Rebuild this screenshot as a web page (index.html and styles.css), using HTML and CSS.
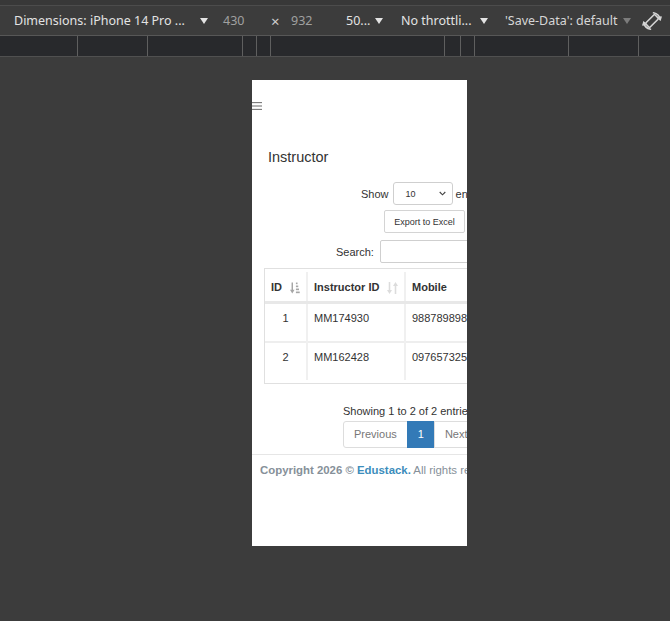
FILE: index.html
```html
<!DOCTYPE html>
<html lang="en">
<head>
    <meta charset="UTF-8" />
    <title>Instructor - Device preview</title>
    <link rel="stylesheet" href="styles.css">
</head>
<body>

<div class="tab-strip"></div>

<div class="toolbar">
    <span class="tb-select tb-dims">Dimensions: iPhone 14 Pro ...<i class="caret"></i></span>
    <span class="tb-num tb-width">430</span>
    <span class="tb-x">&times;</span>
    <span class="tb-num tb-height">932</span>
    <span class="tb-select tb-zoom">50...<i class="caret"></i></span>
    <span class="tb-select tb-throttle">No throttli...<i class="caret"></i></span>
    <span class="tb-select tb-save">'Save-Data': default<i class="caret dim"></i></span>
    <svg class="tb-rotate" viewBox="0 0 20 20" width="20" height="20">
        <g fill="none" stroke="#d4d4d4" stroke-width="1.6" stroke-linecap="round">
            <rect x="7" y="3.5" width="6" height="13" rx="1" transform="rotate(45 10 10)"/>
            <path d="M11.5 1.8 A8.3 8.3 0 0 1 18.2 8.5"/>
            <path d="M16.2 6.8 L18.2 8.5 L19 5.9"/>
            <path d="M8.5 18.2 A8.3 8.3 0 0 1 1.8 11.5"/>
            <path d="M3.8 13.2 L1.8 11.5 L1 14.1"/>
        </g>
    </svg>
</div>

<div class="ruler">
    <span></span><span></span><span></span><span></span><span></span>
    <span></span><span></span><span></span><span></span><span></span>
    <span></span>
</div>

<main class="stage">
    <div class="device">
        <div class="page">
            <svg class="menu-btn" viewBox="0 0 10 8" width="10" height="8">
                <g stroke="#777" stroke-width="1.1">
                    <line x1="0" y1="0.6" x2="10" y2="0.6"/>
                    <line x1="0" y1="4" x2="10" y2="4"/>
                    <line x1="0" y1="7.4" x2="10" y2="7.4"/>
                </g>
            </svg>

            <h1 class="page-title">Instructor</h1>

            <div class="dt-length">
                <span>Show</span>
                <span class="select">10
                    <svg viewBox="0 0 8 5" width="7" height="5"><path d="M0.8 0.8 L4 4 L7.2 0.8" fill="none" stroke="#444" stroke-width="1.3"/></svg>
                </span>
                <span>entries</span>
            </div>

            <div class="dt-buttons">
                <button class="btn-export">Export to Excel</button>
            </div>

            <div class="dt-search">
                <label for="search">Search:</label>
                <input type="search" id="search">
            </div>

            <div class="table-wrap">
                <table class="data-table">
                    <thead>
                        <tr>
                            <th class="col-id">
                                <div class="th-inner">ID
                                    <svg class="sort-icon active" viewBox="0 0 11 12" width="10" height="12">
                                        <path d="M2.5 0 V8.5" stroke="currentColor" stroke-width="1.6"/>
                                        <path d="M0 8 H5 L2.5 12 Z" fill="currentColor"/>
                                        <rect x="6.5" y="0" width="1.8" height="1.8" fill="currentColor"/>
                                        <rect x="6.5" y="3.3" width="2.6" height="1.8" fill="currentColor"/>
                                        <rect x="6.5" y="6.6" width="3.4" height="1.8" fill="currentColor"/>
                                        <rect x="6.5" y="9.9" width="4.2" height="1.8" fill="currentColor"/>
                                    </svg>
                                </div>
                            </th>
                            <th class="col-code">
                                <div class="th-inner">Instructor ID
                                    <svg class="sort-icon" viewBox="0 0 11 12" width="11" height="12">
                                        <path d="M2.5 0 V8.5" stroke="currentColor" stroke-width="1.6"/>
                                        <path d="M0 8 H5 L2.5 12 Z" fill="currentColor"/>
                                        <path d="M8.5 3.5 V12" stroke="currentColor" stroke-width="1.6"/>
                                        <path d="M6 4 H11 L8.5 0 Z" fill="currentColor"/>
                                    </svg>
                                </div>
                            </th>
                            <th class="col-mobile"><div class="th-inner">Mobile</div></th>
                        </tr>
                    </thead>
                    <tbody>
                        <tr>
                            <td class="col-id">1</td>
                            <td>MM174930</td>
                            <td>9887898982</td>
                        </tr>
                        <tr>
                            <td class="col-id">2</td>
                            <td>MM162428</td>
                            <td>0976573251</td>
                        </tr>
                    </tbody>
                </table>
            </div>

            <div class="dt-info">Showing 1 to 2 of 2 entries</div>

            <ul class="pagination">
                <li class="disabled"><a href="#">Previous</a></li>
                <li class="active"><a href="#">1</a></li>
                <li class="disabled"><a href="#">Next</a></li>
            </ul>

            <footer class="main-footer">
                <strong>Copyright 2026 &copy; <a href="#">Edustack.</a></strong> All rights reserved.
            </footer>
        </div>
    </div>
</main>

</body>
</html>
```

FILE: styles.css
```css
body {
    margin: 0;
    background: #3c3c3c;
    font-family: "Noto Sans", "Open Sans", sans-serif;
    overflow: hidden;
}

/* DevTools chrome */
.tab-strip {
    height: 5px;
    background: #383838;
    border-bottom: 1px solid #4c4c4c;
}

.toolbar {
    display: flex;
    align-items: center;
    height: 29px;
    background: #3c3c3c;
    border-bottom: 1px solid #575757;
    color: #e3e3e3;
    font-size: 12.5px;
    white-space: nowrap;
}

.tb-select {
    display: flex;
    align-items: center;
    justify-content: space-between;
}

.caret {
    width: 0;
    height: 0;
    border-left: 4px solid transparent;
    border-right: 4px solid transparent;
    border-top: 6px solid #e3e3e3;
}
.caret.dim {
    border-top-color: #7c7c7c;
}

.tb-dims { margin-left: 14px; width: 194px; }
.tb-num { color: #a0a0a0; }
.tb-width { margin-left: 15px; width: 48px; }
.tb-x { width: 20px; color: #cfcfcf; font-size: 15px; }
.tb-height { width: 55px; }
.tb-zoom { width: 37px; }
.tb-throttle { margin-left: 18px; width: 87px; }
.tb-save { margin-left: 17px; width: 126px; color: #d6d6d6; }
.tb-rotate { margin-left: 11px; }

.ruler {
    display: grid;
    grid-template-columns: 78px 70px 95px 14px 14px 174px 16px 14px 94px 70px 1fr;
    height: 20px;
    background: #28292c;
    border-bottom: 1px solid #505050;
}
.ruler span {
    border-right: 1px solid #5f5f5f;
}
.ruler span:last-child {
    border-right: none;
}

/* Emulated device */
.stage {
    padding: 23px 0 0 252px;
}

.device {
    width: 215px;
    height: 466px;
    background: #fff;
    overflow: hidden;
    font-family: "Liberation Sans", Arial, sans-serif;
    font-size: 11px;
    color: #333;
}

.page {
    width: 360px;
}

.menu-btn {
    display: block;
    margin-top: 22px;
}

.page-title {
    margin: 37px 0 0 16px;
    font-size: 14.5px;
    line-height: 20px;
    font-weight: normal;
    color: #333;
}

.dt-length {
    display: flex;
    align-items: center;
    height: 23px;
    margin-top: 15px;
    padding-left: 109px;
}

.select {
    display: flex;
    align-items: center;
    justify-content: space-between;
    box-sizing: border-box;
    width: 60px;
    height: 23px;
    margin: 0 3px 0 4px;
    padding: 0 6px 0 12px;
    border: 1px solid #cfcfcf;
    border-radius: 3px;
    font-size: 9px;
}

.dt-buttons {
    margin-top: 5px;
    padding-left: 132px;
}

.btn-export {
    display: block;
    box-sizing: border-box;
    width: 81px;
    height: 23px;
    padding: 0;
    background: #fff;
    border: 1px solid #d4d4d4;
    border-radius: 2px;
    font-family: inherit;
    font-size: 9px;
    color: #333;
}

.dt-search {
    display: flex;
    align-items: center;
    height: 23px;
    margin-top: 7px;
    padding-left: 84px;
}

.dt-search input {
    box-sizing: border-box;
    width: 150px;
    height: 23px;
    margin-left: 6px;
    border: 1px solid #cfcfcf;
    border-radius: 2px;
}

/* Table */
.table-wrap {
    width: 300px;
    margin: 5px 0 0 12px;
    padding: 3px 0;
    border: 1px solid #e0e0e0;
}

.data-table {
    border-collapse: collapse;
    width: 100%;
}

.data-table th,
.data-table td {
    padding: 8px 6px 16px;
    line-height: 13px;
    text-align: left;
    border-right: 2px solid #f0f0f0;
    white-space: nowrap;
}

.data-table th {
    padding: 9px 6px 7px;
    font-weight: bold;
    border-bottom: 3px solid #e8e8e8;
}

.data-table tbody tr + tr td {
    border-top: 2px solid #eeeeee;
}

.data-table .col-id { width: 29px; }
.data-table .col-code { width: 84px; }
.data-table td.col-id { text-align: center; }

.th-inner {
    display: flex;
    align-items: center;
    justify-content: space-between;
}

.sort-icon {
    color: #dcdcdc;
}
.sort-icon.active {
    color: #a6a6a6;
}

.dt-info {
    margin-top: 21px;
    padding-left: 91px;
    line-height: 13px;
}

.pagination {
    display: flex;
    list-style: none;
    margin: 3px 0 0 91px;
    padding: 0;
}

.pagination a {
    display: block;
    height: 25px;
    line-height: 25px;
    padding: 0 10px;
    border: 1px solid #ddd;
    margin-left: -1px;
    color: #777;
    text-decoration: none;
}

.pagination li:first-child a {
    margin-left: 0;
    border-radius: 3px 0 0 3px;
}

.pagination li.active a {
    background: #337ab7;
    border-color: #337ab7;
    color: #fff;
}

.main-footer {
    margin-top: 6px;
    padding: 9px 0 0 8px;
    width: 215px;
    border-top: 1px solid #e6e6e6;
    font-size: 11.4px;
    line-height: 13px;
    color: #869099;
    white-space: nowrap;
}

.main-footer a {
    color: #3c8dbc;
    text-decoration: none;
}
```
